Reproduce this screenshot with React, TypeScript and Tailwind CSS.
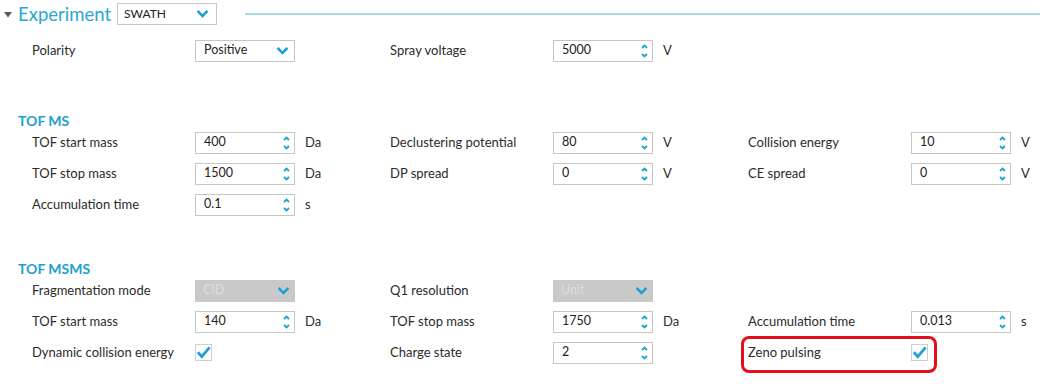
import React from 'react'

const FONT = { fontFamily: 'Lato, "Open Sans", sans-serif' }

function Chevron() {
  return (
    <svg width="11" height="8" viewBox="0 0 11 8" className="shrink-0">
      <path d="M1.5 1.8 L5.5 5.8 L9.5 1.8" fill="none" stroke="#1aa3d4" strokeWidth="2.6" strokeLinecap="square" />
    </svg>
  )
}

function Spinner() {
  return (
    <svg width="7" height="16" viewBox="0 0 7 16" className="shrink-0">
      <path d="M1 5 L3.5 2.5 L6 5" fill="none" stroke="#1aa3d4" strokeWidth="1.8" />
      <path d="M1 11 L3.5 13.5 L6 11" fill="none" stroke="#1aa3d4" strokeWidth="1.8" />
    </svg>
  )
}

function Select({ value, disabled = false }: { value: string; disabled?: boolean }) {
  return (
    <div
      className={`shrink-0 w-[100px] h-[22px] flex items-center justify-between pl-[8px] pr-[6px] text-[12.5px] ${
        disabled ? 'bg-[#c9c9c9] text-[#dedede]' : 'bg-white border border-[#c6c6c6] text-[#222]'
      }`}
    >
      <span>{value}</span>
      <Chevron />
    </div>
  )
}

function Numeric({ value }: { value: string }) {
  return (
    <div className="shrink-0 w-[100px] h-[22px] flex items-center justify-between pl-[8px] pr-[4px] bg-white border border-[#c6c6c6] text-[12.5px] text-[#222]">
      <span>{value}</span>
      <Spinner />
    </div>
  )
}

function Check() {
  return (
    <div className="shrink-0 w-[17px] h-[17px] border border-[#cfcfcf] bg-white flex items-center justify-center">
      <svg width="15" height="13" viewBox="0 0 15 13">
        <path d="M1.8 6.3 L5.8 10.6 L13.6 1.4" fill="none" stroke="#1aa3d4" strokeWidth="2.8" />
      </svg>
    </div>
  )
}

type Field = {
  label: string
  kind: 'num' | 'select' | 'select-off' | 'check'
  value?: string
  unit?: string
  highlight?: boolean
}

function Cell({ f }: { f?: Field }) {
  if (!f) return <div className="shrink-0 w-[358px]" />
  return (
    <div className="relative shrink-0 w-[358px] h-[31px] flex items-center">
      {f.highlight && (
        <div className="absolute left-[-7px] top-[-1px] w-[196px] h-[37px] border-[3px] border-[#e3101b] rounded-[8px]" />
      )}
      <div className="shrink-0 w-[163px] text-[13px] text-[#2b2b2b] whitespace-nowrap">{f.label}</div>
      {f.kind === 'num' && <Numeric value={f.value ?? ''} />}
      {f.kind === 'select' && <Select value={f.value ?? ''} />}
      {f.kind === 'select-off' && <Select value={f.value ?? ''} disabled />}
      {f.kind === 'check' && <Check />}
      {f.unit && <div className="ml-[10px] text-[13px] text-[#2b2b2b]">{f.unit}</div>}
    </div>
  )
}

function Row({ cells }: { cells: (Field | undefined)[] }) {
  return (
    <div className="h-[31px] flex items-center pl-[32px]">
      {cells.map((c, i) => (
        <Cell key={i} f={c} />
      ))}
    </div>
  )
}

function Heading({ children, mt }: { children: React.ReactNode; mt: string }) {
  return (
    <div className={`${mt} h-[13px] leading-[13px] pl-[18px] text-[14px] font-bold text-[#1c9fd0]`}>{children}</div>
  )
}

export default function App() {
  return (
    <div className="w-[1060px] h-[384px] bg-white overflow-hidden" style={FONT}>
      {/* Header */}
      <div className="h-[28px] flex items-center">
        <svg width="8" height="6" viewBox="0 0 8 6" className="ml-[4px] mr-[6px] mt-[1px] shrink-0">
          <polygon points="0,0 8,0 4,5.5" fill="#5a5a5a" />
        </svg>
        <span className="w-[99px] shrink-0 text-[18.5px] leading-[28px] text-[#2aa7d2]">Experiment</span>
        <div className="shrink-0 w-[100px] h-[22px] flex items-center justify-between pl-[6px] pr-[8px] bg-white border border-[#c6c6c6] text-[12px] text-[#222]">
          <span>SWATH</span>
          <Chevron />
        </div>
        <div className="ml-[28px] w-[795px] h-[2px] bg-[#a9dbe9]" />
      </div>

      <div className="mt-[7px]">
        <Row
          cells={[
            { label: 'Polarity', kind: 'select', value: 'Positive' },
            { label: 'Spray voltage', kind: 'num', value: '5000', unit: 'V' }
          ]}
        />
      </div>

      <Heading mt="mt-[48px]">TOF MS</Heading>
      <Row
        cells={[
          { label: 'TOF start mass', kind: 'num', value: '400', unit: 'Da' },
          { label: 'Declustering potential', kind: 'num', value: '80', unit: 'V' },
          { label: 'Collision energy', kind: 'num', value: '10', unit: 'V' }
        ]}
      />
      <Row
        cells={[
          { label: 'TOF stop mass', kind: 'num', value: '1500', unit: 'Da' },
          { label: 'DP spread', kind: 'num', value: '0', unit: 'V' },
          { label: 'CE spread', kind: 'num', value: '0', unit: 'V' }
        ]}
      />
      <Row cells={[{ label: 'Accumulation time', kind: 'num', value: '0.1', unit: 's' }]} />

      <Heading mt="mt-[42px]">TOF MSMS</Heading>
      <Row
        cells={[
          { label: 'Fragmentation mode', kind: 'select-off', value: 'CID' },
          { label: 'Q1 resolution', kind: 'select-off', value: 'Unit' }
        ]}
      />
      <Row
        cells={[
          { label: 'TOF start mass', kind: 'num', value: '140', unit: 'Da' },
          { label: 'TOF stop mass', kind: 'num', value: '1750', unit: 'Da' },
          { label: 'Accumulation time', kind: 'num', value: '0.013', unit: 's' }
        ]}
      />
      <Row
        cells={[
          { label: 'Dynamic collision energy', kind: 'check' },
          { label: 'Charge state', kind: 'num', value: '2' },
          { label: 'Zeno pulsing', kind: 'check', highlight: true }
        ]}
      />
    </div>
  )
}
